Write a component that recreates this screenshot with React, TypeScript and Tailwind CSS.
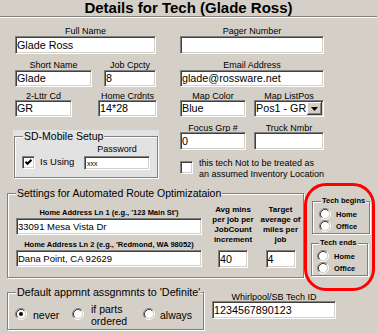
import type { ReactNode } from 'react';

const sunken =
  'border border-t-[#808080] border-l-[#808080] border-b-white border-r-white shadow-[inset_1px_1px_0_#404040,inset_-1px_-1px_0_#d4d0c8]';

type FieldProps = {
  label: string;
  value?: string;
  className: string;
  labelClass?: string;
  labelText?: string;
  boxClass: string;
  textClass?: string;
  children?: ReactNode;
};

function Field({
  label,
  value = '',
  className,
  labelClass = 'h-[10px]',
  labelText = 'text-[9px]',
  boxClass,
  textClass = 'text-[10.75px]',
  children,
}: FieldProps) {
  return (
    <div className={`flex shrink-0 flex-col ${className}`}>
      <div className={`flex justify-center whitespace-nowrap leading-[10px] ${labelText} ${labelClass}`}>{label}</div>
      <div className={`flex items-center overflow-hidden whitespace-nowrap bg-white pl-[1px] leading-none ${sunken} ${textClass} ${boxClass}`}>
        <span>{value}</span>
        {children}
      </div>
    </div>
  );
}

type GroupProps = {
  title: string;
  className: string;
  titleClass: string;
  children?: ReactNode;
};

function Group({ title, className, titleClass, children }: GroupProps) {
  return (
    <div className={`relative shrink-0 border border-[#808080] shadow-[inset_1px_1px_0_#fff,1px_1px_0_#fff] ${className}`}>
      <span className={`absolute whitespace-nowrap px-[1px] ${titleClass}`}>{title}</span>
      {children}
    </div>
  );
}

function Radio({ checked = false }: { checked?: boolean }) {
  return (
    <svg width="12" height="12" viewBox="0 0 12 12" className="block shrink-0">
      <circle cx="6" cy="6" r="4.2" fill="#fff" />
      <path d="M2.11 9.89A5.5 5.5 0 0 1 9.89 2.11" fill="none" stroke="#808080" />
      <path d="M9.89 2.11A5.5 5.5 0 0 1 2.11 9.89" fill="none" stroke="#fff" />
      <path d="M2.82 9.18A4.5 4.5 0 0 1 9.18 2.82" fill="none" stroke="#404040" />
      <path d="M9.18 2.82A4.5 4.5 0 0 1 2.82 9.18" fill="none" stroke="#d4d0c8" />
      {checked ? <circle cx="6" cy="6" r="2" fill="#000" /> : null}
    </svg>
  );
}

function Check({ checked = false }: { checked?: boolean }) {
  return (
    <div className={`flex h-[13px] w-[13px] shrink-0 items-center justify-center bg-white ${sunken}`}>
      {checked ? (
        <svg width="7" height="7" viewBox="0 0 7 7" className="block">
          <polyline points="0.5,2.8 2.5,4.8 6.5,0.8" fill="none" stroke="#000" strokeWidth="2.2" />
        </svg>
      ) : null}
    </div>
  );
}

function RadioRow({ label, className }: { label: string; className: string }) {
  return (
    <div className={`flex h-[12px] items-center ${className}`}>
      <Radio />
      <span className="ml-[5px] text-[7.5px] font-bold leading-[9px]">{label}</span>
    </div>
  );
}

export default function App() {
  return (
    <div className="relative h-[334px] w-[377px] overflow-hidden bg-[#d4d0c8] font-[family-name:'Liberation_Sans',Arial,sans-serif] text-black">
      <div className="h-[16px] text-center text-[15px] font-bold leading-[16px]">Details for Tech (Glade Ross)</div>
      <div className="h-[2px] border-t border-b border-t-[#808080] border-b-white" />

      <div className="mt-[8px] flex">
        <Field label="Full Name" value="Glade Ross" className="ml-[15px] w-[141px]" boxClass="h-[18px]" />
        <Field label="Pager Number" className="ml-[24px] w-[144px]" boxClass="h-[18px]" />
      </div>

      <div className="mt-[6px] flex">
        <Field label="Short Name" value="Glade" className="ml-[15px] w-[77px]" boxClass="h-[17px]" />
        <Field label="Job Cpcty" value="8" className="ml-[12px] w-[52px]" boxClass="h-[17px]" />
        <Field label="Email Address" value="glade@rossware.net" className="ml-[24px] w-[144px]" boxClass="h-[17px]" />
      </div>

      <div className="mt-[4px] flex">
        <Field label="2-Lttr Cd" value="GR" className="ml-[15px] w-[57px]" labelClass="h-[9px]" boxClass="h-[17px]" />
        <Field label="Home Crdnts" value="14*28" className="ml-[26px] w-[59px]" labelClass="h-[9px]" boxClass="h-[17px]" />
        <Field label="Map Color" value="Blue" className="ml-[23px] w-[66px]" labelClass="h-[9px]" boxClass="h-[17px]" />
        <Field label="Map ListPos" value="Pos1 - GR" className="ml-[8px] w-[70px]" labelClass="h-[9px]" boxClass="h-[17px]">
          <div className="ml-auto mr-[1px] flex h-[13px] w-[15px] items-center justify-center bg-[#d4d0c8] shadow-[inset_-1px_-1px_0_#404040,inset_1px_1px_0_#fff,inset_-2px_-2px_0_#808080]">
            <svg width="7" height="4" viewBox="0 0 7 4" className="block">
              <path d="M0 0h7L3.5 4z" fill="#000" />
            </svg>
          </div>
        </Field>
      </div>

      <div className="flex h-[62px]">
        <div className="ml-[13px] mt-[13px] h-[49px] w-[146px] shrink-0 bg-[#e2e2e2] pl-[1px] pt-[6px]">
          <Group
            title="SD-Mobile Setup"
            className="h-[42px] w-[144px]"
            titleClass="-top-[7px] left-[8px] bg-[#e2e2e2] text-[10.5px] leading-[12px]"
          >
            <div className="ml-[69px] mt-[7px] flex h-[10px] w-[66px] justify-center text-[9px] leading-[10px]">Password</div>
            <div className="mt-[2px] flex items-start">
              <div className="ml-[7px]">
                <Check checked />
              </div>
              <span className="ml-[5px] w-[44px] text-[9.5px] leading-[12px]">Is Using</span>
              <div className={`flex h-[14px] w-[66px] items-center bg-white pl-[2px] text-[7px] leading-none ${sunken}`}>xxx</div>
            </div>
          </Group>
        </div>

        <div className="ml-[21px] mt-[6px] flex flex-col">
          <div className="flex">
            <Field label="Focus Grp #" value="0" className="w-[66px]" labelClass="h-[9px]" boxClass="h-[18px]" />
            <Field label="Truck Nmbr" className="ml-[8px] w-[70px]" labelClass="h-[9px]" boxClass="h-[18px]" />
          </div>
          <div className="mt-[11px] flex items-start">
            <Check />
            <span className="-mt-[3px] ml-[6px] whitespace-nowrap text-[9px] leading-[11px]">
              this tech Not to be treated as
              <br />
              an assumed Inventory Location
            </span>
          </div>
        </div>
      </div>

      <div className="mt-[14px] flex">
        <Group
          title="Settings for Automated Route Optimizataion"
          className="ml-[7px] flex h-[85px] w-[297px]"
          titleClass="-top-[7px] left-[8px] bg-[#d4d0c8] text-[10.5px] leading-[13px]"
        >
          <div className="ml-[8px] mt-[14px] flex w-[186px] shrink-0 flex-col">
            <Field
              label="Home Address Ln 1 (e.g., '123 Main St')"
              value="33091 Mesa Vista Dr"
              className="w-[186px]"
              labelText="text-[7.5px] font-bold"
              textClass="text-[9.5px]"
              boxClass="h-[17px]"
            />
            <Field
              label="Home Address Ln 2 (e.g., 'Redmond, WA 98052)"
              value="Dana Point, CA 92629"
              className="mt-[5px] w-[186px]"
              labelText="text-[7.5px] font-bold"
              textClass="text-[9.5px]"
              boxClass="h-[17px]"
            />
          </div>
          <div className="ml-[8px] mt-[11px] flex w-[46px] shrink-0 flex-col items-center">
            <div className="whitespace-nowrap text-center text-[8px] font-bold leading-[10px]">
              Avg mins
              <br />
              per job per
              <br />
              JobCount
              <br />
              increment
            </div>
            <div className={`mt-[5px] flex h-[18px] w-[30px] items-center bg-white pl-[1px] text-[10.75px] leading-none ${sunken}`}>40</div>
          </div>
          <div className="ml-[2px] mt-[11px] flex w-[45px] shrink-0 flex-col items-center">
            <div className="whitespace-nowrap text-center text-[8px] font-bold leading-[10px]">
              Target
              <br />
              average of
              <br />
              miles per
              <br />
              job
            </div>
            <div className={`mt-[5px] flex h-[18px] w-[30px] items-center bg-white pl-[1px] text-[10.75px] leading-none ${sunken}`}>4</div>
          </div>
        </Group>

        <div className="ml-[7px] flex flex-col">
          <Group
            title="Tech begins"
            className="ml-[1px] mt-[8px] h-[33px] w-[58px]"
            titleClass="-top-[6px] left-[8px] bg-[#d4d0c8] text-[7.5px] font-bold leading-[9px]"
          >
            <RadioRow label="Home" className="ml-[6px] mt-[6px]" />
            <RadioRow label="Office" className="ml-[6px]" />
          </Group>
          <Group
            title="Tech ends"
            className="mt-[9px] h-[33px] w-[57px]"
            titleClass="-top-[6px] left-[7px] bg-[#d4d0c8] text-[7.5px] font-bold leading-[9px]"
          >
            <RadioRow label="Home" className="ml-[5px] mt-[6px]" />
            <RadioRow label="Office" className="ml-[5px]" />
          </Group>
        </div>
      </div>

      <div className="mt-[14px] flex">
        <Group
          title="Default appmnt assgnmnts to 'Definite'"
          className="ml-[7px] h-[38px] w-[197px]"
          titleClass="-top-[7px] left-[8px] bg-[#d4d0c8] text-[10.75px] leading-[13px]"
        >
          <div className="ml-[7px] mt-[15px] flex items-start text-[10.5px] leading-[12px]">
            <Radio checked />
            <span className="ml-[6px] mt-[1px] w-[39px]">never</span>
            <Radio />
            <span className="-mt-[5px] ml-[7px] w-[52px]">
              if parts
              <br />
              ordered
            </span>
            <Radio />
            <span className="ml-[5px] mt-[1px]">always</span>
          </div>
        </Group>
        <Field
          label="Whirlpool/SB Tech ID"
          value="1234567890123"
          className="ml-[8px] w-[124px]"
          labelClass="h-[9px]"
          boxClass="h-[18px]"
        />
      </div>

      <div className="pointer-events-none absolute left-[304px] top-[183px] h-[108px] w-[71px] rounded-[22px] border-[3px] border-[#ff0000]" />
    </div>
  );
}
